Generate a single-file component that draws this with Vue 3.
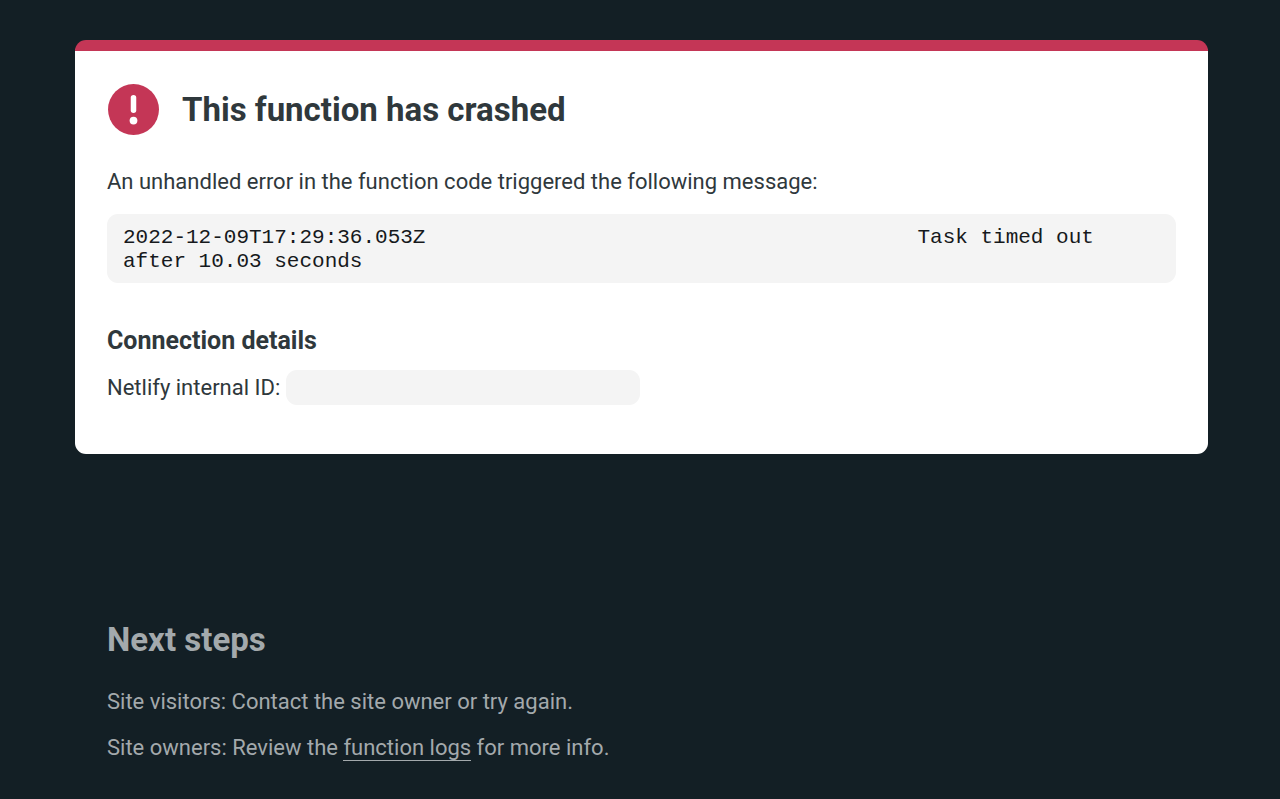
<script setup>
const timestamp = '2022-12-09T17:29:36.053Z'
</script>

<template>
  <main class="page">
    <section class="card">
      <header class="card-header">
        <svg class="alert" viewBox="0 0 52 52" aria-hidden="true">
          <circle cx="26" cy="26" r="25" fill="#c43656" />
          <path d="M26 14.4V26.8" fill="none" stroke="#fff" stroke-width="5.4" stroke-linecap="round" />
          <circle cx="26" cy="36.9" r="3.8" fill="#fff" />
        </svg>
        <h1>This function has crashed</h1>
      </header>
      <p class="intro">An unhandled error in the function code triggered the following message:</p>
      <div class="message"><span>{{ timestamp }}</span><span class="redacted"></span><span>Task timed out</span> <span>after 10.03 seconds</span></div>
      <h2>Connection details</h2>
      <p class="connection">Netlify internal ID: <code class="request-id"></code></p>
    </section>
    <section class="next">
      <h2 class="next-title">Next steps</h2>
      <p>Site visitors: Contact the site owner or try again.</p>
      <p>Site owners: Review the <a href="#">function logs</a> for more info.</p>
    </section>
  </main>
</template>

<style>
body {
  margin: 0;
  background: #131f25;
}
</style>

<style scoped>
.page {
  box-sizing: border-box;
  padding: 40px 72px 36px 75px;
  font-family: Roboto, "Liberation Sans", sans-serif;
  font-size: 22px;
  line-height: 30px;
  color: #2f383c;
}
h1, h2, p {
  margin: 0;
}
.card {
  padding: 32px 32px 49px;
  border-top: 11px solid #c43656;
  border-radius: 11px;
  background: #fff;
}
.card-header {
  display: flex;
  align-items: center;
  gap: 22px;
}
.alert {
  width: 53px;
  height: 53px;
}
h1, .next-title {
  font-size: 33px;
  line-height: 40px;
}
.intro {
  margin-top: 31px;
}
.message {
  margin-top: 17px;
  padding: 12px 16px 9px;
  border-radius: 11px;
  background: #f4f4f4;
  color: #16191c;
  font-family: "Liberation Mono", monospace;
  font-size: 21px;
  line-height: 24px;
}
.redacted {
  display: inline-block;
  width: 492px;
}
.card h2 {
  margin-top: 43px;
  font-size: 25px;
  line-height: 30px;
}
.connection {
  display: flex;
  align-items: center;
  gap: 6px;
  margin-top: 14px;
}
.request-id {
  width: 354px;
  height: 35px;
  border-radius: 11px;
  background: #f4f4f4;
}
.next {
  margin-top: 166px;
  padding: 0 32px;
  color: #a3a9ac;
}
.next p {
  margin-top: 16px;
}
.next .next-title + p {
  margin-top: 27px;
}
.next a {
  color: inherit;
  text-decoration: none;
  border-bottom: 1px solid currentColor;
}
</style>
